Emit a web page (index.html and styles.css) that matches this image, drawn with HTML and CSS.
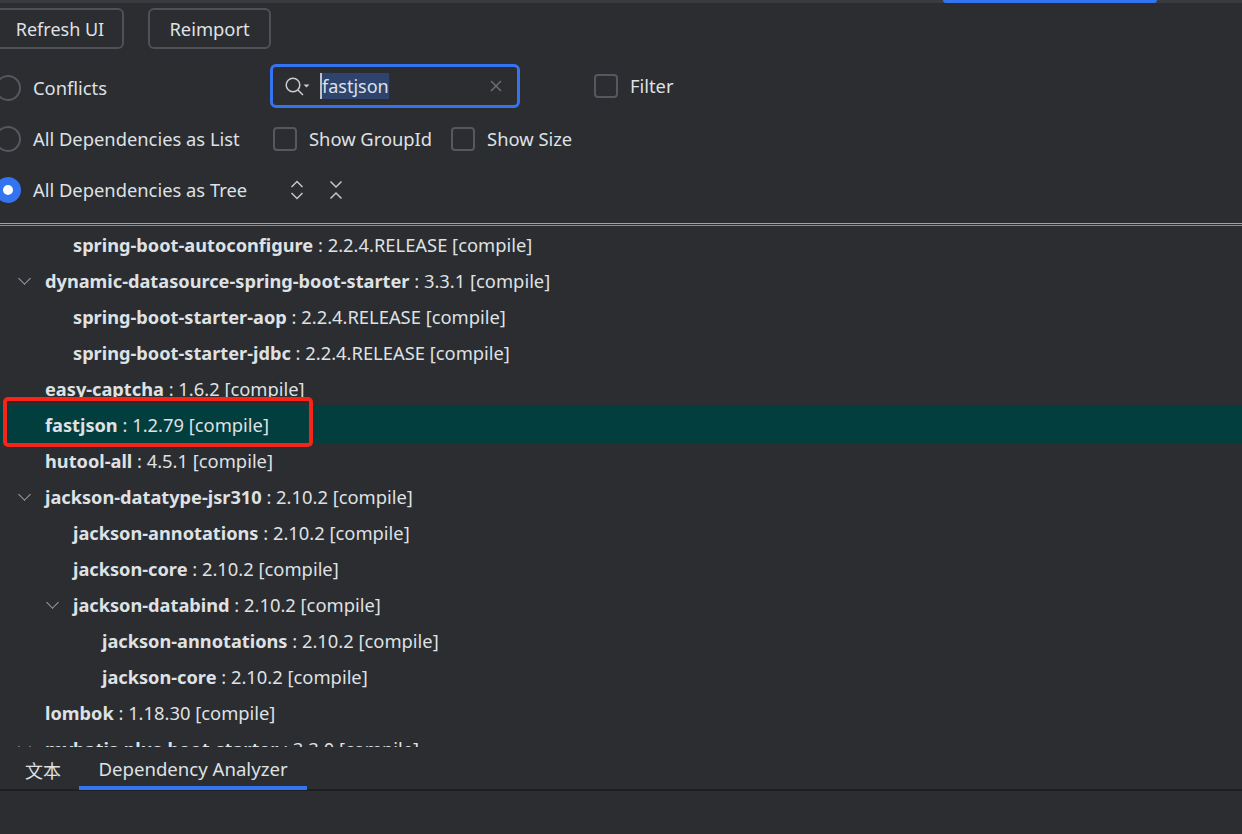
FILE: index.html
```html
<!DOCTYPE html>
<html lang="en">
<head>
<meta charset="utf-8">
<title>Dependency Analyzer</title>
<link rel="stylesheet" href="styles.css">
</head>
<body>
<div class="topstrip"><span class="topstrip-active"></span></div>
<section class="toolbar">
  <div class="buttons">
    <button class="btn btn-refresh">Refresh UI</button>
    <button class="btn btn-reimport">Reimport</button>
  </div>
  <div class="option-row row-conflicts">
    <label class="radio-label"><span class="radio"></span>Conflicts</label>
    <div class="search">
      <svg class="search-icon" width="26" height="22" viewBox="0 0 26 22" fill="none"><circle cx="8" cy="10" r="6.800" stroke="#c9ccd1" stroke-width="1.500"/><path d="M13 15 18 20" stroke="#c9ccd1" stroke-width="1.500"/><path d="M18.500 9.500h6l-3 3z" fill="#c9ccd1"/></svg>
      <span class="caret"></span><span class="search-text">fastjson</span>
      <svg class="clear-icon" width="12" height="12" viewBox="0 0 12 12" fill="none"><path d="M1 1l10 10M11 1 1 11" stroke="#6f7277" stroke-width="1.400"/></svg>
    </div>
    <label class="check-label filter-check"><span class="checkbox"></span>Filter</label>
  </div>
  <div class="option-row row-list">
    <label class="radio-label"><span class="radio"></span>All Dependencies as List</label>
    <label class="check-label check-group"><span class="checkbox"></span>Show GroupId</label>
    <label class="check-label"><span class="checkbox"></span>Show Size</label>
  </div>
  <div class="option-row row-tree">
    <label class="radio-label"><span class="radio radio-on"></span>All Dependencies as Tree</label>
    <div class="tree-tools">
      <svg width="14" height="20" viewBox="0 0 14 20" fill="none"><path d="M1.500 7 7 1.500 12.500 7M1.500 13 7 18.500 12.500 13" stroke="#c4c7cc" stroke-width="1.500"/></svg>
      <svg width="14" height="20" viewBox="0 0 14 20" fill="none"><path d="M1.500 1.500 7 7 12.500 1.500M1.500 18.500 7 13 12.500 18.500" stroke="#c4c7cc" stroke-width="1.500"/></svg>
    </div>
  </div>
</section>
<div class="divider"></div>
<main class="tree">
  <div class="node lvl1"><b>spring-boot-autoconfigure</b> : 2.2.4.RELEASE [compile]</div>
  <div class="node lvl0 open"><b>dynamic-datasource-spring-boot-starter</b> : 3.3.1 [compile]</div>
  <div class="node lvl1"><b>spring-boot-starter-aop</b> : 2.2.4.RELEASE [compile]</div>
  <div class="node lvl1"><b>spring-boot-starter-jdbc</b> : 2.2.4.RELEASE [compile]</div>
  <div class="node lvl0"><b>easy-captcha</b> : 1.6.2 [compile]</div>
  <div class="node lvl0 selected"><b>fastjson</b> : 1.2.79 [compile]</div>
  <div class="node lvl0"><b>hutool-all</b> : 4.5.1 [compile]</div>
  <div class="node lvl0 open"><b>jackson-datatype-jsr310</b> : 2.10.2 [compile]</div>
  <div class="node lvl1"><b>jackson-annotations</b> : 2.10.2 [compile]</div>
  <div class="node lvl1"><b>jackson-core</b> : 2.10.2 [compile]</div>
  <div class="node lvl1 open"><b>jackson-databind</b> : 2.10.2 [compile]</div>
  <div class="node lvl2"><b>jackson-annotations</b> : 2.10.2 [compile]</div>
  <div class="node lvl2"><b>jackson-core</b> : 2.10.2 [compile]</div>
  <div class="node lvl0"><b>lombok</b> : 1.18.30 [compile]</div>
  <div class="node lvl0 open"><b>mybatis-plus-boot-starter</b> : 3.3.0 [compile]</div>
</main>
<nav class="tabs">
  <span class="tab tab-text">文本</span>
  <span class="tab tab-active">Dependency Analyzer</span>
</nav>
<div class="highlight-box"></div>
</body>
</html>
```

FILE: styles.css
```css
* { box-sizing: border-box; }
html, body { margin: 0; height: 100%; }
body {
  position: relative;
  width: 1242px;
  height: 834px;
  overflow: hidden;
  background: #2b2d30;
  color: #dfe1e5;
  font-family: "Noto Sans", "Noto Sans CJK SC", sans-serif;
  font-size: 18.350px;
  display: flex;
  flex-direction: column;
}
.topstrip {
  height: 3px;
  background: #393b3f;
  padding-left: 943px;
}
.topstrip-active {
  display: block;
  width: 214px;
  height: 3px;
  background: #3574f0;
  border-radius: 0 0 3px 3px;
}
.toolbar { height: 220px; margin-left: -5px; }
.buttons { display: flex; gap: 24px; padding-top: 5px; }
.btn {
  height: 41px;
  background: transparent;
  border: 2px solid #4e5157;
  border-radius: 6px;
  color: #dfe1e5;
  font: inherit;
  padding: 0;
}
.btn-refresh { width: 129px; padding-left: 1px; font-size: 18px; }
.btn-reimport { width: 123px; }
.option-row { display: flex; align-items: center; height: 51px; }
.row-conflicts { margin-top: 13px; }
.radio-label { display: flex; align-items: center; gap: 12px; width: 275px; flex: none; }
.radio {
  width: 26px;
  height: 26px;
  border-radius: 50%;
  border: 2px solid #55585e;
  flex: none;
}
.radio-on {
  border: 8px solid #3574f0;
  background: #fff;
}
.check-label { display: flex; align-items: center; gap: 12px; }
.checkbox {
  width: 24px;
  height: 24px;
  border: 2px solid #55585e;
  border-radius: 4px;
  flex: none;
}
.check-group { margin-right: 19px; margin-left: 3px; }
.filter-check { margin-left: 74px; margin-top: -4px; }
.search {
  position: relative;
  display: flex;
  align-items: center;
  width: 250px;
  height: 44px;
  margin-top: -3px;
  border: 3px solid #3574f0;
  border-radius: 6px;
  padding-left: 12px;
}
.search-icon { flex: none; margin-right: 9px; }
.caret { width: 2px; height: 26px; background: #bfc2c7; flex: none; }
.search-text { background: #2e436e; line-height: 26px; height: 26px; font-size: 18px; }
.clear-icon { margin-left: auto; margin-right: 15px; }
.tree-tools { display: flex; gap: 25px; margin-left: 20px; }
.divider {
  height: 3px;
  border-top: 1px solid #9fa3a9;
  border-bottom: 1px solid #8b8f95;
  background: #2b2d30;
}
.tree { height: 521px; overflow: hidden; }
.node {
  position: relative;
  height: 36px;
  line-height: 38px;
  white-space: nowrap;
}
.node b { font-weight: 700; font-size: 18.200px; }
.lvl0 { padding-left: 45px; }
.lvl1 { padding-left: 73px; }
.lvl2 { padding-left: 102px; }
.open::before {
  content: "";
  position: absolute;
  top: 12px;
  width: 8px;
  height: 8px;
  border-right: 1.500px solid #9da0a6;
  border-bottom: 1.500px solid #9da0a6;
  transform: rotate(45deg);
}
.lvl0.open::before { left: 20px; }
.lvl1.open::before { left: 48px; }
.selected { background: #033e3e; box-shadow: 0 1px 0 #033e3e; }
.tabs {
  height: 44px;
  display: flex;
  border-bottom: 2px solid #1e1f22;
}
.tab { display: flex; align-items: center; height: 42px; font-size: 18.600px; padding-top: 4px; }
.tab-text { width: 79px; padding-left: 25px; font-size: 18px; }
.tab-active {
  width: 228px;
  justify-content: center;
  border-bottom: 4px solid #3574f0;
  height: 43px;
}
.highlight-box {
  position: absolute;
  left: 3px;
  top: 397px;
  width: 310px;
  height: 50px;
  border: 4px solid #f5251a;
  border-radius: 5px;
}
```
